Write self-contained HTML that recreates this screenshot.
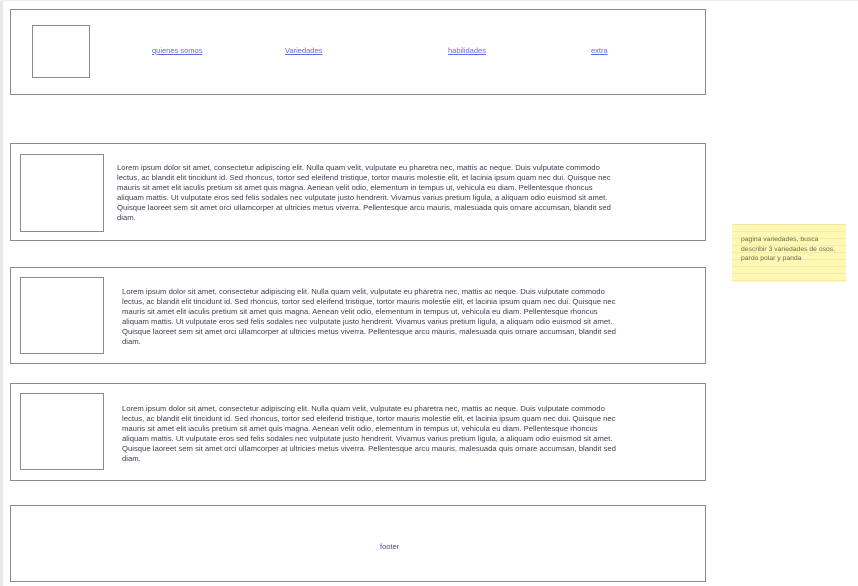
<!DOCTYPE html>
<html><head><style>
body{margin:0;width:858px;height:586px;background:#fff;position:relative;overflow:hidden;font-family:"Liberation Sans",sans-serif;}
.b{position:absolute;border:1px solid #8a8a8a;box-sizing:border-box;background:#fff}
.img{position:absolute;border:1px solid #8a8a8a;box-sizing:border-box}
a{position:absolute;color:#5a6ee0;font-size:7.5px;text-decoration:underline;top:46px}
.t{position:absolute;font-size:7.7px;line-height:10px;color:#404050;width:498px}
</style></head><body>
<div style="position:absolute;left:0;top:0;width:3px;height:586px;background:#e8e8e8"></div>
<div style="position:absolute;left:0;top:0;width:858px;height:1px;background:#eee"></div>
<div class="b" style="left:10px;top:9px;width:696px;height:86px"></div>
<div class="img" style="left:32px;top:25px;width:58px;height:53px"></div>
<a style="left:152px">quienes somos</a>
<a style="left:285px">Variedades</a>
<a style="left:448px">habilidades</a>
<a style="left:591px">extra</a>

<div class="b" style="left:10px;top:143px;width:696px;height:98px"></div>
<div class="img" style="left:20px;top:154px;width:84px;height:78px"></div>
<div class="t" style="left:117px;top:163px">Lorem ipsum dolor sit amet, consectetur adipiscing elit. Nulla quam velit, vulputate eu pharetra nec, mattis ac neque. Duis vulputate commodo lectus, ac blandit elit tincidunt id. Sed rhoncus, tortor sed eleifend tristique, tortor mauris molestie elit, et lacinia ipsum quam nec dui. Quisque nec mauris sit amet elit iaculis pretium sit amet quis magna. Aenean velit odio, elementum in tempus ut, vehicula eu diam. Pellentesque rhoncus aliquam mattis. Ut vulputate eros sed felis sodales nec vulputate justo hendrerit. Vivamus varius pretium ligula, a aliquam odio euismod sit amet. Quisque laoreet sem sit amet orci ullamcorper at ultricies metus viverra. Pellentesque arcu mauris, malesuada quis ornare accumsan, blandit sed diam.</div>

<div class="b" style="left:10px;top:267px;width:696px;height:97px"></div>
<div class="img" style="left:20px;top:277px;width:84px;height:77px"></div>
<div class="t" style="left:122px;top:287px">Lorem ipsum dolor sit amet, consectetur adipiscing elit. Nulla quam velit, vulputate eu pharetra nec, mattis ac neque. Duis vulputate commodo lectus, ac blandit elit tincidunt id. Sed rhoncus, tortor sed eleifend tristique, tortor mauris molestie elit, et lacinia ipsum quam nec dui. Quisque nec mauris sit amet elit iaculis pretium sit amet quis magna. Aenean velit odio, elementum in tempus ut, vehicula eu diam. Pellentesque rhoncus aliquam mattis. Ut vulputate eros sed felis sodales nec vulputate justo hendrerit. Vivamus varius pretium ligula, a aliquam odio euismod sit amet. Quisque laoreet sem sit amet orci ullamcorper at ultricies metus viverra. Pellentesque arcu mauris, malesuada quis ornare accumsan, blandit sed diam.</div>

<div class="b" style="left:10px;top:383px;width:696px;height:98px"></div>
<div class="img" style="left:20px;top:393px;width:84px;height:77px"></div>
<div class="t" style="left:122px;top:404px">Lorem ipsum dolor sit amet, consectetur adipiscing elit. Nulla quam velit, vulputate eu pharetra nec, mattis ac neque. Duis vulputate commodo lectus, ac blandit elit tincidunt id. Sed rhoncus, tortor sed eleifend tristique, tortor mauris molestie elit, et lacinia ipsum quam nec dui. Quisque nec mauris sit amet elit iaculis pretium sit amet quis magna. Aenean velit odio, elementum in tempus ut, vehicula eu diam. Pellentesque rhoncus aliquam mattis. Ut vulputate eros sed felis sodales nec vulputate justo hendrerit. Vivamus varius pretium ligula, a aliquam odio euismod sit amet. Quisque laoreet sem sit amet orci ullamcorper at ultricies metus viverra. Pellentesque arcu mauris, malesuada quis ornare accumsan, blandit sed diam.</div>

<div class="b" style="left:10px;top:505px;width:696px;height:77px"></div>
<div style="position:absolute;left:380px;top:542px;font-size:7.5px;color:#4050a0">footer</div>

<div style="position:absolute;left:732px;top:224px;width:114px;height:57px;background:#fdf9b4;border-top:1px solid #eee8a0;background-image:repeating-linear-gradient(#fdf9b4 0 6px,#f3eda8 6px 7px)"></div>
<div style="position:absolute;left:741px;top:235px;width:100px;font-size:6.8px;line-height:9.5px;color:#6a6a50">pagina variedades, busca describir 3 variedades de osos, pardo polar y panda</div>
</body></html>
